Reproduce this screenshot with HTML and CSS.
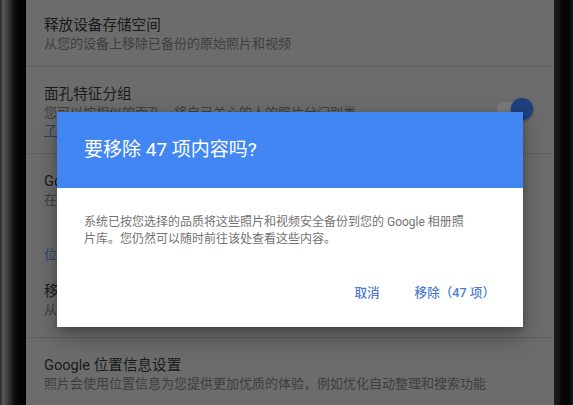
FILE: index.html
```html
<!DOCTYPE html>
<html lang="zh-CN">
<head>
<meta charset="utf-8">
<title>Google 相册设置</title>
<link rel="stylesheet" href="styles.css">
</head>
<body>
<div class="phone">
  <div class="bezel bezel-left"></div>
  <div class="screen">
    <div class="list">
      <div class="item">
        <div class="item-text">
          <div class="item-title">释放设备存储空间</div>
          <div class="item-sub">从您的设备上移除已备份的原始照片和视频</div>
        </div>
      </div>
      <div class="divider"></div>
      <div class="item">
        <div class="item-text">
          <div class="item-title">面孔特征分组</div>
          <div class="item-sub">您可以按相似的面孔，将自己关心的人的照片分门别类</div>
          <div class="item-link">了解详情</div>
        </div>
        <div class="switch"><span class="switch-track"></span><span class="switch-knob"></span></div>
      </div>
      <div class="divider"></div>
      <div class="item">
        <div class="item-text">
          <div class="item-title">Google 帐号照片备份</div>
          <div class="item-sub">在您的所有设备上同步照片和视频</div>
        </div>
      </div>
      <div class="section-head">位置</div>
      <div class="item item-last-in-section">
        <div class="item-text">
          <div class="item-title">移除地理位置信息</div>
          <div class="item-sub">从您通过链接分享的照片中移除地理位置信息</div>
        </div>
      </div>
      <div class="divider"></div>
      <div class="item">
        <div class="item-text">
          <div class="item-title">Google 位置信息设置</div>
          <div class="item-sub">照片会使用位置信息为您提供更加优质的体验，例如优化自动整理和搜索功能</div>
        </div>
      </div>
    </div>

    <div class="dialog" role="dialog">
      <div class="dialog-head">要移除 47 项内容吗?</div>
      <div class="dialog-body">
        <p class="dialog-text">系统已按您选择的品质将这些照片和视频安全备份到您的 Google 相册照<br>片库。您仍然可以随时前往该处查看这些内容。</p>
        <div class="dialog-actions">
          <span class="btn">取消</span>
          <span class="btn">移除（47 项）</span>
        </div>
      </div>
    </div>
  </div>
  <div class="bezel bezel-right"></div>
</div>
</body>
</html>
```

FILE: styles.css
```css
* { box-sizing: border-box; }

html, body {
  margin: 0;
  padding: 0;
  width: 573px;
  height: 405px;
  overflow: hidden;
  background: #000;
  font-family: Roboto, "Noto Sans CJK SC", sans-serif;
}

.phone {
  display: flex;
  width: 573px;
  height: 405px;
}

.bezel { flex: none; height: 100%; }

.bezel-left {
  width: 26px;
  background: linear-gradient(to right, #262626 0, #585858 3px, #3c3c3c 8px, #111 14px, #050505 18px, #000 26px);
}

.bezel-right {
  width: 19px;
  background: linear-gradient(to right, #1c1c1c 0, #161616 5px, #080808 7px, #050505 15px, #1e1e1e 19px);
}

.screen {
  position: relative;
  flex: 1;
  height: 100%;
  overflow: hidden;
  background: #6c6c6c;
}

.list {
  margin-top: -2px;
  display: flex;
  flex-direction: column;
}

.item {
  display: flex;
  align-items: center;
  padding: 17px 21px 13px 18px;
}

.item-last-in-section { padding-bottom: 18px; }

.item-text {
  flex: 1;
  display: flex;
  flex-direction: column;
}

.item-title {
  font-size: 14.6px;
  line-height: 20px;
  color: #1a1a1a;
  white-space: nowrap;
}

.item-sub {
  font-size: 13px;
  line-height: 18px;
  color: #3e3e3e;
  white-space: nowrap;
}

.item-link {
  font-size: 13px;
  line-height: 18px;
  color: #2c3d60;
  text-decoration: underline;
}

.section-head {
  padding: 24px 18px 0;
  font-size: 13px;
  line-height: 18px;
  color: #33466b;
}

.divider {
  height: 1px;
  background: #5f5f5f;
}

.switch {
  position: relative;
  flex: none;
  width: 36px;
  height: 22px;
  margin-bottom: 6px;
}

.switch-track {
  position: absolute;
  left: 0;
  top: 4px;
  width: 34px;
  height: 14px;
  border-radius: 7px;
  background: #7a7a7c;
}

.switch-knob {
  position: absolute;
  right: 0;
  top: 0;
  width: 22px;
  height: 22px;
  border-radius: 50%;
  background: #1f3f7e;
  box-shadow: 0 1px 3px rgba(0, 0, 0, 0.35);
}

.dialog {
  position: absolute;
  left: 31px;
  top: 112px;
  width: 466px;
  height: 215px;
  background: #fff;
  display: flex;
  flex-direction: column;
  box-shadow: 0 10px 22px rgba(0, 0, 0, 0.3), 0 2px 6px rgba(0, 0, 0, 0.2);
}

.dialog-head {
  height: 76px;
  padding: 25px 27px 0;
  background: #4286f4;
  color: #fff;
  font-size: 19px;
  line-height: 26px;
}

.dialog-body {
  flex: 1;
  display: flex;
  flex-direction: column;
  padding: 26px 27px 0;
}

.dialog-text {
  margin: 0;
  font-size: 12px;
  line-height: 17px;
  color: #727272;
  white-space: nowrap;
}

.dialog-actions {
  display: flex;
  justify-content: flex-end;
  gap: 35px;
  margin-top: 35px;
  padding-right: 1px;
}

.btn {
  font-size: 12.6px;
  line-height: 20px;
  font-weight: 500;
  color: #4c7cd0;
}
```
